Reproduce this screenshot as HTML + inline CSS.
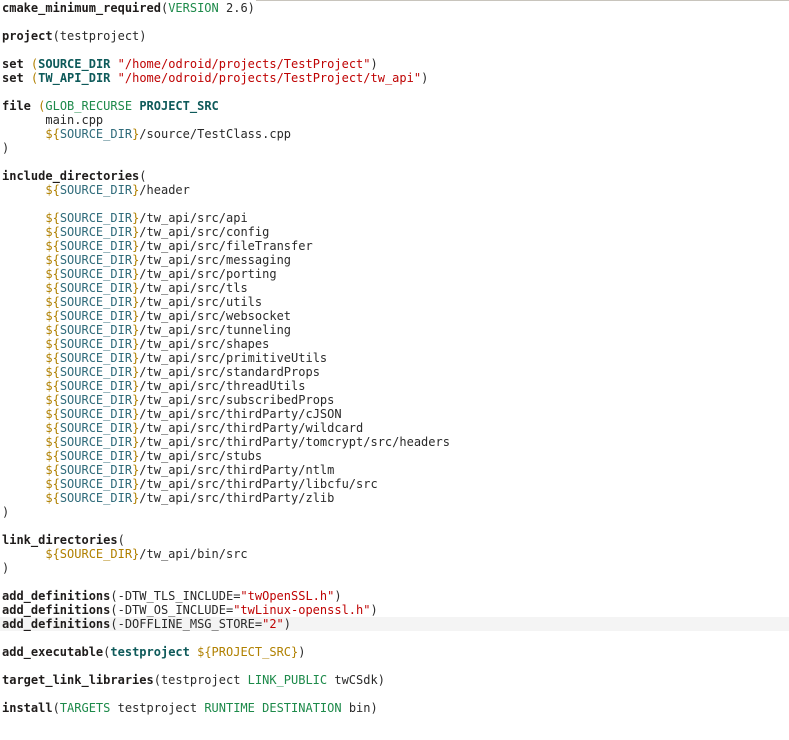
<!DOCTYPE html>
<html><head><meta charset="utf-8"><style>
html,body{margin:0;padding:0;background:#fff;width:789px;height:740px;overflow:hidden;position:relative}
.top{position:absolute;left:256px;top:0;width:533px;height:1px;background:#c8c4bc}
.hl{position:absolute;left:0;top:617px;width:789px;height:14px;background:#f4f4f4}
pre{position:absolute;left:2px;top:1px;margin:0;font-family:"DejaVu Sans Mono","Liberation Mono",monospace;font-size:12px;line-height:14px;color:#2a2a2a}
b{color:#1f1c1b}
.k{color:#1d8a4a}
.s{color:#bf0303}
.v{color:#b08000}
.vn{color:#2f6b7a}
.t{color:#0e5a5a;font-weight:bold}
.o{color:#b08000}
</style></head><body>
<div class="top"></div><div class="hl"></div>
<pre><b>cmake_minimum_required</b>(<span class="k">VERSION</span> 2.6)

<b>project</b>(testproject)

<b>set</b> <span class="o">(</span><span class="t">SOURCE_DIR</span> <span class="s">"/home/odroid/projects/TestProject"</span>)
<b>set</b> <span class="o">(</span><span class="t">TW_API_DIR</span> <span class="s">"/home/odroid/projects/TestProject/tw_api"</span>)

<b>file</b> <span class="o">(</span><span class="k">GLOB_RECURSE</span> <span class="t">PROJECT_SRC</span>
      main.cpp
      <span class="v">${</span><span class="vn">SOURCE_DIR</span><span class="v">}</span>/source/TestClass.cpp
)

<b>include_directories</b>(
      <span class="v">${</span><span class="vn">SOURCE_DIR</span><span class="v">}</span>/header

      <span class="v">${</span><span class="vn">SOURCE_DIR</span><span class="v">}</span>/tw_api/src/api
      <span class="v">${</span><span class="vn">SOURCE_DIR</span><span class="v">}</span>/tw_api/src/config
      <span class="v">${</span><span class="vn">SOURCE_DIR</span><span class="v">}</span>/tw_api/src/fileTransfer
      <span class="v">${</span><span class="vn">SOURCE_DIR</span><span class="v">}</span>/tw_api/src/messaging
      <span class="v">${</span><span class="vn">SOURCE_DIR</span><span class="v">}</span>/tw_api/src/porting
      <span class="v">${</span><span class="vn">SOURCE_DIR</span><span class="v">}</span>/tw_api/src/tls
      <span class="v">${</span><span class="vn">SOURCE_DIR</span><span class="v">}</span>/tw_api/src/utils
      <span class="v">${</span><span class="vn">SOURCE_DIR</span><span class="v">}</span>/tw_api/src/websocket
      <span class="v">${</span><span class="vn">SOURCE_DIR</span><span class="v">}</span>/tw_api/src/tunneling
      <span class="v">${</span><span class="vn">SOURCE_DIR</span><span class="v">}</span>/tw_api/src/shapes
      <span class="v">${</span><span class="vn">SOURCE_DIR</span><span class="v">}</span>/tw_api/src/primitiveUtils
      <span class="v">${</span><span class="vn">SOURCE_DIR</span><span class="v">}</span>/tw_api/src/standardProps
      <span class="v">${</span><span class="vn">SOURCE_DIR</span><span class="v">}</span>/tw_api/src/threadUtils
      <span class="v">${</span><span class="vn">SOURCE_DIR</span><span class="v">}</span>/tw_api/src/subscribedProps
      <span class="v">${</span><span class="vn">SOURCE_DIR</span><span class="v">}</span>/tw_api/src/thirdParty/cJSON
      <span class="v">${</span><span class="vn">SOURCE_DIR</span><span class="v">}</span>/tw_api/src/thirdParty/wildcard
      <span class="v">${</span><span class="vn">SOURCE_DIR</span><span class="v">}</span>/tw_api/src/thirdParty/tomcrypt/src/headers
      <span class="v">${</span><span class="vn">SOURCE_DIR</span><span class="v">}</span>/tw_api/src/stubs
      <span class="v">${</span><span class="vn">SOURCE_DIR</span><span class="v">}</span>/tw_api/src/thirdParty/ntlm
      <span class="v">${</span><span class="vn">SOURCE_DIR</span><span class="v">}</span>/tw_api/src/thirdParty/libcfu/src
      <span class="v">${</span><span class="vn">SOURCE_DIR</span><span class="v">}</span>/tw_api/src/thirdParty/zlib
)

<b>link_directories</b>(
      <span class="v">${SOURCE_DIR}</span>/tw_api/bin/src
)

<b>add_definitions</b>(-DTW_TLS_INCLUDE=<span class="s">"twOpenSSL.h"</span>)
<b>add_definitions</b>(-DTW_OS_INCLUDE=<span class="s">"twLinux-openssl.h"</span>)
<b>add_definitions</b>(-DOFFLINE_MSG_STORE=<span class="s">"2"</span>)

<b>add_executable</b>(<span class="t">testproject</span> <span class="v">${PROJECT_SRC}</span>)

<b>target_link_libraries</b>(testproject <span class="k">LINK_PUBLIC</span> twCSdk)

<b>install</b>(<span class="k">TARGETS</span> testproject <span class="k">RUNTIME</span> <span class="k">DESTINATION</span> bin)
</pre>
</body></html>
